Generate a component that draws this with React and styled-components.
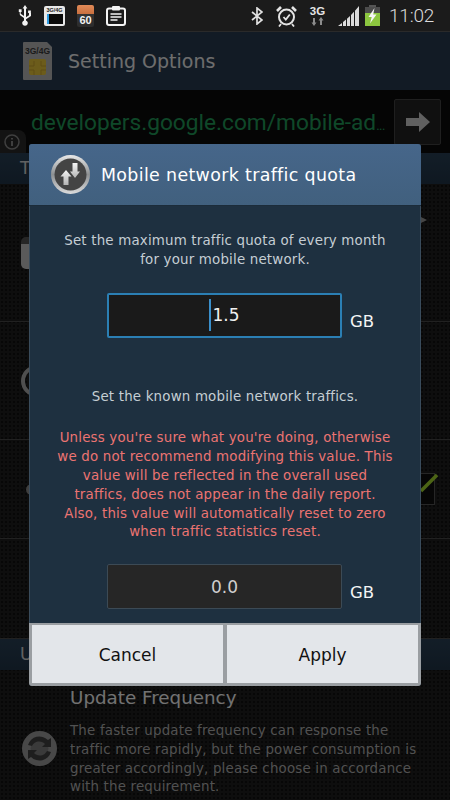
import React from "react";
import styled, { createGlobalStyle } from "styled-components";

const UI_FONT = `"DejaVu Sans", "Open Sans", sans-serif`;

const GlobalStyle = createGlobalStyle`
  html, body {
    margin: 0;
    padding: 0;
    background: #000;
  }
  * {
    box-sizing: border-box;
  }
`;

const Screen = styled.div`
  position: relative;
  width: 450px;
  height: 800px;
  overflow: hidden;
  font-family: ${UI_FONT};
  background-color: #1f1f1f;
  background-image: radial-gradient(rgba(0, 0, 0, 0.45) 1px, transparent 1.2px);
  background-size: 4px 4px;
`;

const StatusBar = styled.div`
  height: 32px;
  display: flex;
  align-items: center;
  justify-content: space-between;
  padding: 0 17px 0 18px;
  background: #1b1b1b;
  border-bottom: 1px solid #2a2a2a;
`;

const StatusGroup = styled.div`
  display: flex;
  align-items: center;
  gap: ${(props) => props.$gap}px;
`;

const Clock = styled.span`
  width: 44px;
  margin-left: 9px;
  font-family: Roboto, sans-serif;
  font-weight: 300;
  font-size: 19px;
  letter-spacing: -0.2px;
  white-space: nowrap;
  color: #dcdcdc;
`;

const SdCard = styled.div`
  width: 21px;
  height: 20px;
  display: flex;
  flex-direction: column;
  align-items: center;
  padding: 1px 2px 2px;
  border-radius: 2px;
  background: #e8e8e8;
`;

const SdLabel = styled.span`
  font-family: "Liberation Sans", sans-serif;
  font-size: 5.5px;
  line-height: 7px;
  font-weight: 700;
  color: #222;
  white-space: nowrap;
`;

const SdSlot = styled.div`
  width: 16px;
  flex: 1;
  background: #0a0a0a;
  border-left: 2px solid #2c9be0;
`;

const ChargeBadge = styled.div`
  width: 17px;
  height: 22px;
  display: flex;
  flex-direction: column;
  justify-content: flex-end;
  align-items: center;
  border-radius: 2px;
  background: linear-gradient(#e08a58 0, #c9703f 40%, #333 41%, #2c2c2c 100%);
`;

const ChargeLevel = styled.span`
  font-family: "Liberation Sans", sans-serif;
  font-size: 11px;
  line-height: 13px;
  font-weight: 700;
  color: #f2f2f2;
`;

const NetworkBadge = styled.div`
  width: 15px;
  display: flex;
  flex-direction: column;
  align-items: center;
`;

const NetworkLabel = styled.span`
  font-family: "Liberation Sans", sans-serif;
  font-size: 11.5px;
  line-height: 11px;
  font-weight: 700;
  color: #e4e4e4;
`;

const AppBar = styled.div`
  height: 58px;
  display: flex;
  align-items: center;
  gap: 16px;
  padding-left: 23px;
  background: #283d53;
`;

const AppTitle = styled.span`
  font-size: 19px;
  color: #f2f2f2;
`;

const UrlBar = styled.div`
  position: relative;
  height: 63px;
  display: flex;
  align-items: flex-start;
  justify-content: space-between;
  padding: 9px 9px 0 31px;
  background: #0c0c0c;
`;

const UrlText = styled.div`
  height: 46px;
  line-height: 47px;
  font-family: Roboto, sans-serif;
  font-size: 22.7px;
  color: #22a05c;
  white-space: nowrap;
`;

const UrlEllipsis = styled.span`
  font-size: 13px;
  letter-spacing: -0.5px;
`;

const GoButton = styled.div`
  width: 47px;
  height: 46px;
  flex: none;
  display: flex;
  align-items: center;
  justify-content: center;
  border: 1px solid #454545;
  border-radius: 2px;
  background: #242424;
`;

const InfoBadge = styled.div`
  position: absolute;
  left: 0;
  bottom: 0;
  width: 26px;
  height: 23px;
  display: flex;
  align-items: center;
  justify-content: center;
  padding-right: 2px;
  border-top-right-radius: 8px;
  background: #2b2b2b;
`;

const SectionHeader = styled.div`
  height: 31px;
  line-height: 31px;
  padding-left: 20px;
  font-size: 17px;
  color: #d8d8d8;
  background: linear-gradient(#2a4258, #22364a);
`;

const Row = styled.div`
  height: ${(props) => props.$height}px;
  display: flex;
  align-items: center;
  justify-content: space-between;
  padding: 0 15px 0 21px;
  border-bottom: 1px solid #4a4a4a;
`;

const LockShape = styled.div`
  width: 24px;
  height: 32px;
  border-radius: 5px;
  background: linear-gradient(#555 0 22%, #c8c8c8 22% 100%);
`;

const RingShape = styled.div`
  width: 32px;
  height: 32px;
  border: 4px solid #b0b0b0;
  border-radius: 50%;
`;

const DotShape = styled.div`
  width: 12px;
  height: 11px;
  margin-left: 5px;
  border-radius: 50%;
  background: #8c8c8c;
`;

const RowArrow = styled.div`
  align-self: flex-start;
  margin-top: 33px;
  margin-right: 8px;
  width: 0;
  height: 0;
  border-top: 3px solid transparent;
  border-bottom: 3px solid transparent;
  border-left: 6px solid #999;
`;

const CheckBox = styled.div`
  position: relative;
  width: 32px;
  height: 32px;
  border: 1px solid #555;
  background: #0e0e0e;
`;

const CheckMark = styled.svg`
  position: absolute;
  right: -4px;
  top: -1px;
`;

const UpdateRow = styled.div`
  display: flex;
  align-items: flex-start;
  gap: 13px;
  padding: 17px 0 0 22px;
`;

const RefreshSvg = styled.svg`
  flex: none;
  margin-top: 44px;
`;

const UpdateText = styled.div`
  flex: 1;
  min-width: 0;
`;

const UpdateTitle = styled.div`
  font-size: 18.3px;
  line-height: 22px;
  color: #fcfcfc;
`;

const UpdateBody = styled.div`
  margin-top: 13px;
  padding-right: 20px;
  font-size: 13.4px;
  line-height: 18.8px;
  letter-spacing: 0.18px;
  color: #b4b4b4;
`;

const Scrim = styled.div`
  position: absolute;
  left: 0;
  right: 0;
  top: 32px;
  bottom: 0;
  display: flex;
  align-items: center;
  justify-content: center;
  padding-bottom: 2px;
  background: rgba(0, 0, 0, 0.55);
`;

const Dialog = styled.div`
  width: 392px;
  height: 542px;
  display: flex;
  flex-direction: column;
  border-radius: 3px;
  overflow: hidden;
  background: #1e3040;
`;

const DialogHeader = styled.div`
  height: 62px;
  flex: none;
  display: flex;
  align-items: center;
  gap: 11px;
  padding-left: 22px;
  background: linear-gradient(#46668a 0, #41607e 100%);
  border-bottom: 1px solid #1c2c3a;
`;

const DialogTitle = styled.span`
  font-size: 17.4px;
  letter-spacing: 0.35px;
  color: #fff;
`;

const DialogBody = styled.div`
  flex: 1;
  padding: 26px 30px 0;
  border-left: 1px solid #3a4c5c;
  border-right: 1px solid #3a4c5c;
`;

const Message = styled.p`
  margin: ${(props) => props.$top || 0}px -10px 0;
  font-size: 13.4px;
  line-height: 18.8px;
  letter-spacing: 0.18px;
  text-align: center;
  color: ${(props) => (props.$warning ? "#ec7472" : "#c5ced4")};
`;

const FieldRow = styled.div`
  display: flex;
  align-items: flex-end;
  gap: 8px;
  margin-top: ${(props) => props.$top}px;
  padding-left: 47px;
`;

const Field = styled.div`
  width: 235px;
  height: 45px;
  flex: none;
  display: flex;
  align-items: center;
  justify-content: center;
  font-size: 17px;
  border-radius: 2px;
  color: ${(props) => (props.$active ? "#f0f0f0" : "#cfcfcf")};
  background: ${(props) => (props.$active ? "#1a1a1a" : "#262626")};
  border: ${(props) =>
    props.$active ? "2px solid #2b7fb4" : "1px solid #3c4a55"};
`;

const Caret = styled.span`
  width: 2px;
  height: 32px;
  margin-right: 1px;
  background: #3a8fcb;
`;

const Unit = styled.span`
  padding-bottom: 5px;
  font-size: 16.5px;
  line-height: 22px;
  color: #f4f4f4;
`;

const DialogFooter = styled.div`
  height: 63px;
  flex: none;
  display: grid;
  grid-template-columns: 1fr 1fr;
  gap: 4px;
  padding: 2px 3px 3px;
  background: #9a9ea2;
`;

const FooterButton = styled.button`
  border: 0;
  padding: 2px 0 0;
  font-family: ${UI_FONT};
  font-size: 17px;
  color: #111;
  background: #e3e6ea;
`;

const StatusIcons = () => (
  <StatusBar>
    <StatusGroup $gap={12}>
      <svg width="14" height="22" viewBox="0 0 14 22" fill="#f2f2f2">
        <path d="M7 0l2.4 3.6H8V15.4a2.8 2.8 0 1 1-2 0V13L2.4 10.400A1.700 1.700 0 0 1 1.700 9V7H.8V4.200h2.800V7h-.9v1.700L6 11V3.600H4.600z" />
        <path d="M8 12.200l3-2V8h-.9V5.400h2.800V8H13v2.900l-5 3.300z" />
      </svg>
      <SdCard>
        <SdLabel>3G/4G</SdLabel>
        <SdSlot />
      </SdCard>
      <ChargeBadge>
        <ChargeLevel>60</ChargeLevel>
      </ChargeBadge>
      <svg width="20" height="20" viewBox="0 0 20 20">
        <rect x="1" y="2.500" width="18" height="16.500" rx="2" fill="none" stroke="#f4f4f4" strokeWidth="2" />
        <rect x="6" y="0" width="8" height="4.500" rx="1" fill="#f4f4f4" />
        <path d="M4.500 8h11M4.500 11h11M4.500 14h7" stroke="#f4f4f4" strokeWidth="1.500" />
      </svg>
    </StatusGroup>
    <StatusGroup $gap={0}>
      <StatusGroup $gap={13}>
        <svg width="12" height="18" viewBox="0 0 12 18" fill="none" stroke="#e0e0e0" strokeWidth="1.700">
          <path d="M1 5l10 8-5 4V1l5 4-10 8" />
        </svg>
        <svg width="21" height="22" viewBox="0 0 21 22" fill="none" stroke="#e4e4e4">
          <circle cx="10.500" cy="12" r="7.500" strokeWidth="2" />
          <path d="M7.500 12l2.300 2.500 4-5" strokeWidth="1.800" />
          <path d="M1 6l4-4M20 6l-4-4" strokeWidth="2.600" />
          <path d="M5 19l-2 2.500M16 19l2 2.500" strokeWidth="1.800" />
        </svg>
        <NetworkBadge>
          <NetworkLabel>3G</NetworkLabel>
          <svg width="14" height="9" viewBox="0 0 14 9" fill="#8c8c8c">
            <path d="M3 9L.5 5.500H2V1h2v4.500h1.500zM10 0l2.500 3.500H11V8H9V3.500H7.500z" />
          </svg>
        </NetworkBadge>
        <StatusGroup $gap={6}>
          <svg width="21" height="20" viewBox="0 0 21 20">
            <path d="M0 20L4 17v3zM5 16l3-2.500V20H5zM9 12.700l3-2.700V20H9zM13 9l3-3.200V20h-3zM17 4.800L21 0v20h-4z" fill="#dcdcdc" />
          </svg>
          <svg width="15" height="21" viewBox="0 0 15 21">
            <rect x="4" y="0" width="7" height="2" fill="#555" />
            <rect x="0" y="2" width="15" height="6" fill="#4c4c4c" />
            <rect x="0" y="8" width="15" height="13" fill="#8cc63f" />
            <path d="M9.500 3L3.500 12h3.200L5 18.500 11.500 9.500H8.200z" fill="#f6f6f6" />
          </svg>
        </StatusGroup>
      </StatusGroup>
      <Clock>11:02</Clock>
    </StatusGroup>
  </StatusBar>
);

const SimIcon = () => (
  <svg width="29" height="38" viewBox="0 0 29 38">
    <path d="M1 0h23l5 5v32a1 1 0 0 1-1 1H1a1 1 0 0 1-1-1V1a1 1 0 0 1 1-1z" fill="#bcbcbc" />
    <text x="14.500" y="12" textAnchor="middle" fontSize="8.500" fontWeight="700" fontFamily="Liberation Sans, sans-serif" fill="#3c3c3c">
      3G/4G
    </text>
    <rect x="6" y="17" width="17" height="16" rx="2" fill="#f0cc3c" />
    <path d="M6 24h5v-5M23 24h-5v-5M6 28h5v5M23 28h-5v5" fill="none" stroke="#cfa92e" strokeWidth="1" />
  </svg>
);

const DialogIcon = () => (
  <svg width="39" height="39" viewBox="0 0 39 39">
    <defs>
      <linearGradient id="dialogRing" x1="0" y1="0" x2="0" y2="1">
        <stop offset="0" stopColor="#e8e8e8" />
        <stop offset="0.5" stopColor="#8d9092" />
        <stop offset="1" stopColor="#dcdcdc" />
      </linearGradient>
      <linearGradient id="dialogArrow" x1="0" y1="0" x2="0" y2="1">
        <stop offset="0" stopColor="#f4f4f4" />
        <stop offset="1" stopColor="#b4b4b4" />
      </linearGradient>
    </defs>
    <circle cx="19.500" cy="19.500" r="19.500" fill="url(#dialogRing)" />
    <circle cx="19.500" cy="19.500" r="16" fill="#444" />
    <path d="M15 15l5.500 6.500h-3V30h-5v-8.500h-3z" fill="url(#dialogArrow)" />
    <path d="M24 23l-5-6.500h2.500V8h5v8.500H29z" fill="url(#dialogArrow)" />
  </svg>
);

const RefreshIcon = () => (
  <RefreshSvg width="35" height="35" viewBox="0 0 35 35">
    <circle cx="17.500" cy="17.500" r="17.500" fill="#a0a0a0" />
    <circle cx="17.500" cy="17.500" r="9" fill="#808080" />
    <path d="M6 14a12 12 0 0 1 20-5l3-2v9h-9l3-3a8 8 0 0 0-13 2z" fill="#444" />
    <path d="M29 21a12 12 0 0 1-20 5l-3 2v-9h9l-3 3a8 8 0 0 0 13-2z" fill="#444" />
  </RefreshSvg>
);

function App() {
  return (
    <Screen>
      <GlobalStyle />
      <StatusIcons />
      <AppBar>
        <SimIcon />
        <AppTitle>Setting Options</AppTitle>
      </AppBar>
      <UrlBar>
        <UrlText>
          developers.google.com/mobile-ad<UrlEllipsis>...</UrlEllipsis>
        </UrlText>
        <GoButton>
          <svg width="24" height="20" viewBox="0 0 24 20">
            <path d="M0 6h13V0l11 10-11 10v-6H0z" fill="#d4d4d4" />
          </svg>
        </GoButton>
        <InfoBadge>
          <svg width="16" height="16" viewBox="0 0 16 16" fill="none" stroke="#8c8c8c">
            <circle cx="8" cy="8" r="7" strokeWidth="1.500" />
            <path d="M8 7v5M8 4v1.500" strokeWidth="2" />
          </svg>
        </InfoBadge>
      </UrlBar>
      <SectionHeader>T</SectionHeader>
      <Row $height={138}>
        <LockShape />
        <RowArrow />
      </Row>
      <Row $height={118}>
        <RingShape />
      </Row>
      <Row $height={99}>
        <DotShape />
        <CheckBox>
          <CheckMark width="18" height="20" viewBox="0 0 18 20">
            <path d="M1 18L17 2" stroke="#a8dd30" strokeWidth="3.500" />
          </CheckMark>
        </CheckBox>
      </Row>
      <Row $height={100} />
      <SectionHeader>U</SectionHeader>
      <UpdateRow>
        <RefreshIcon />
        <UpdateText>
          <UpdateTitle>Update Frequency</UpdateTitle>
          <UpdateBody>
            The faster update frequency can response the traffic more rapidly,
            but the power consumption is greater accordingly, please choose in
            accordance with the requirement.
          </UpdateBody>
        </UpdateText>
      </UpdateRow>
      <Scrim>
        <Dialog>
          <DialogHeader>
            <DialogIcon />
            <DialogTitle>Mobile network traffic quota</DialogTitle>
          </DialogHeader>
          <DialogBody>
            <Message>
              Set the maximum traffic quota of every month
              <br />
              for your mobile network.
            </Message>
            <FieldRow $top={23}>
              <Field $active>
                <Caret />
                1.5
              </Field>
              <Unit>GB</Unit>
            </FieldRow>
            <Message $top={50}>Set the known mobile network traffics.</Message>
            <Message $top={23} $warning>
              Unless you're sure what you're doing, otherwise
              <br />
              we do not recommend modifying this value. This
              <br />
              value will be reflected in the overall used
              <br />
              traffics, does not appear in the daily report.
              <br />
              Also, this value will automatically reset to zero
              <br />
              when traffic statistics reset.
            </Message>
            <FieldRow $top={22}>
              <Field>0.0</Field>
              <Unit>GB</Unit>
            </FieldRow>
          </DialogBody>
          <DialogFooter>
            <FooterButton>Cancel</FooterButton>
            <FooterButton>Apply</FooterButton>
          </DialogFooter>
        </Dialog>
      </Scrim>
    </Screen>
  );
}

export default App;
